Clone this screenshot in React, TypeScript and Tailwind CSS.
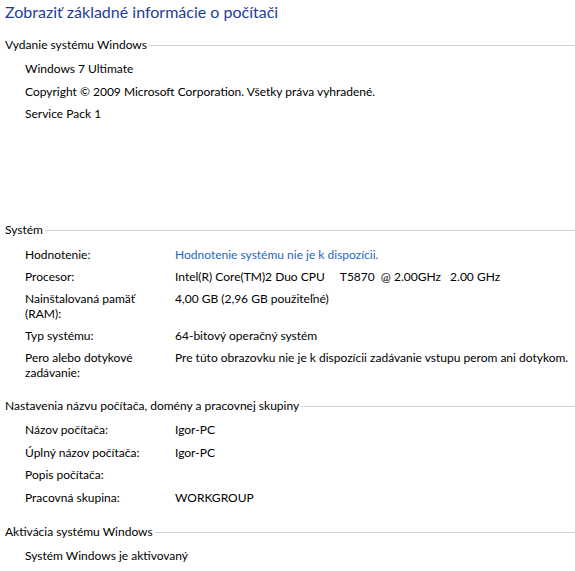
import React from 'react';

type Row = { label?: React.ReactNode; value?: React.ReactNode; link?: boolean };

const SectionHeader = ({ title }: { title: string }) => (
  <div className="flex items-center pl-[5px] h-[15px]">
    <span className="whitespace-nowrap pr-[2px]">{title}</span>
    <div className="flex-1 h-px bg-[#d2d2d2] mt-[2px]" />
  </div>
);

// label column is 150px wide, values start at x=175
const Rows = ({ rows, className }: { rows: Row[]; className: string }) => (
  <div className={`grid grid-cols-[150px_auto] pl-[25px] ${className}`}>
    {rows.map((r, i) =>
      r.label === undefined ? (
        <div key={i} className="col-span-2 whitespace-pre">{r.value}</div>
      ) : (
        <React.Fragment key={i}>
          <div>{r.label}</div>
          <div className={`whitespace-pre ${r.link ? 'text-[#1f66c6]' : ''}`}>{r.value}</div>
        </React.Fragment>
      )
    )}
  </div>
);

const App = () => {
  const edition: Row[] = [
    { value: 'Windows 7 Ultimate' },
    { value: 'Copyright © 2009 Microsoft Corporation. Všetky práva vyhradené.' },
    { value: 'Service Pack 1' },
  ];

  const system: Row[] = [
    { label: 'Hodnotenie:', value: 'Hodnotenie systému nie je k dispozícii.', link: true },
    { label: 'Procesor:', value: 'Intel(R) Core(TM)2 Duo CPU     T5870  @ 2.00GHz   2.00 GHz' },
    { label: <>Nainštalovaná pamäť<br />(RAM):</>, value: '4,00 GB (2,96 GB použiteľné)' },
    { label: 'Typ systému:', value: '64-bitový operačný systém' },
    { label: <>Pero alebo dotykové<br />zadávanie:</>, value: 'Pre túto obrazovku nie je k dispozícii zadávanie vstupu perom ani dotykom.' },
  ];

  const names: Row[] = [
    { label: 'Názov počítača:', value: 'Igor-PC' },
    { label: 'Úplný názov počítača:', value: 'Igor-PC' },
    { label: 'Popis počítača:', value: '' },
    { label: 'Pracovná skupina:', value: 'WORKGROUP' },
  ];

  return (
    <div className="w-[575px] h-[571px] bg-white text-black text-[12px] leading-[15px] font-['Lato','Noto_Sans',sans-serif] overflow-hidden">
      <h1 className="pl-[5px] text-[16px] leading-[24px] text-[#1e3c9a]">Zobraziť základné informácie o počítači</h1>

      <div className="mt-[13px]">
        <SectionHeader title="Vydanie systému Windows" />
        <Rows rows={edition} className="mt-[9px] gap-y-[7.5px]" />
      </div>

      <div className="mt-[101px]">
        <SectionHeader title="Systém" />
        <Rows rows={system} className="mt-[10px] gap-y-[7px]" />
      </div>

      <div className="mt-[18px]">
        <SectionHeader title="Nastavenia názvu počítača, domény a pracovnej skupiny" />
        <Rows rows={names} className="mt-[9px] gap-y-[7.5px]" />
      </div>

      <div className="mt-[19.5px]">
        <SectionHeader title="Aktivácia systému Windows" />
        <Rows rows={[{ value: 'Systém Windows je aktivovaný' }]} className="mt-[9px]" />
      </div>
    </div>
  );
};

export default App;
